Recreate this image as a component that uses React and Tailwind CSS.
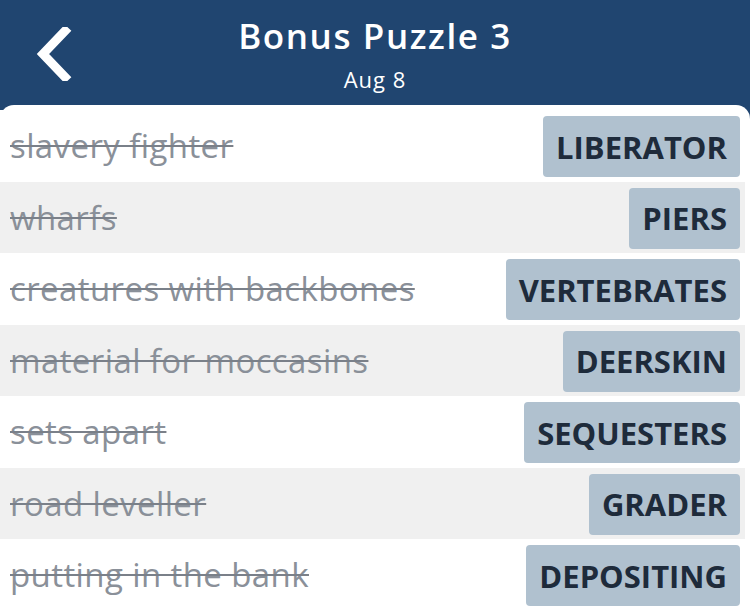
import React from "react";

const rows = [
  ["slavery fighter", "LIBERATOR"],
  ["wharfs", "PIERS"],
  ["creatures with backbones", "VERTEBRATES"],
  ["material for moccasins", "DEERSKIN"],
  ["sets apart", "SEQUESTERS"],
  ["road leveller", "GRADER"],
  ["putting in the bank", "DEPOSITING"],
];

export default function App() {
  return (
    <div
      className="w-[750px] h-[613px] bg-[#204570] overflow-hidden flex flex-col"
      style={{ fontFamily: "'Open Sans', Lato, sans-serif" }}
    >
      <div className="relative h-[105px] shrink-0 flex flex-col items-center">
        <div className="absolute left-[34px] top-[27px]">
          <svg width="40" height="54" viewBox="0 0 40 54">
            <path d="M31 4 L9 27 L31 50" fill="none" stroke="#fff" strokeWidth="9" strokeLinecap="square" strokeLinejoin="miter" />
          </svg>
        </div>
        <div className="text-white font-semibold text-[35px] leading-none mt-[18px] tracking-[1.6px]">Bonus Puzzle 3</div>
        <div className="text-white text-[22px] leading-none mt-[15px] tracking-[1px]">Aug 8</div>
      </div>
      <div className="flex-1 bg-white rounded-t-[14px] pt-[5px] w-full">
        {rows.map(([clue, ans], i) => (
          <div
            key={i}
            className={`h-[71.5px] w-[745px] flex items-center justify-between pl-[10px] pr-[5px] ${i % 2 === 1 ? "bg-[#f0f0f0]" : "bg-white"}`}
          >
            <span className="text-[#8a9099] text-[33px] tracking-[0.4px] line-through decoration-[2px] decoration-[#7a8089] leading-none">
              {clue}
            </span>
            <span className="h-[61px] flex items-center px-[13px] bg-[#b0c1cf] rounded-[4px] text-[#1e2b3b] font-bold text-[31px] mt-[2px]">
              {ans}
            </span>
          </div>
        ))}
      </div>
    </div>
  );
}
